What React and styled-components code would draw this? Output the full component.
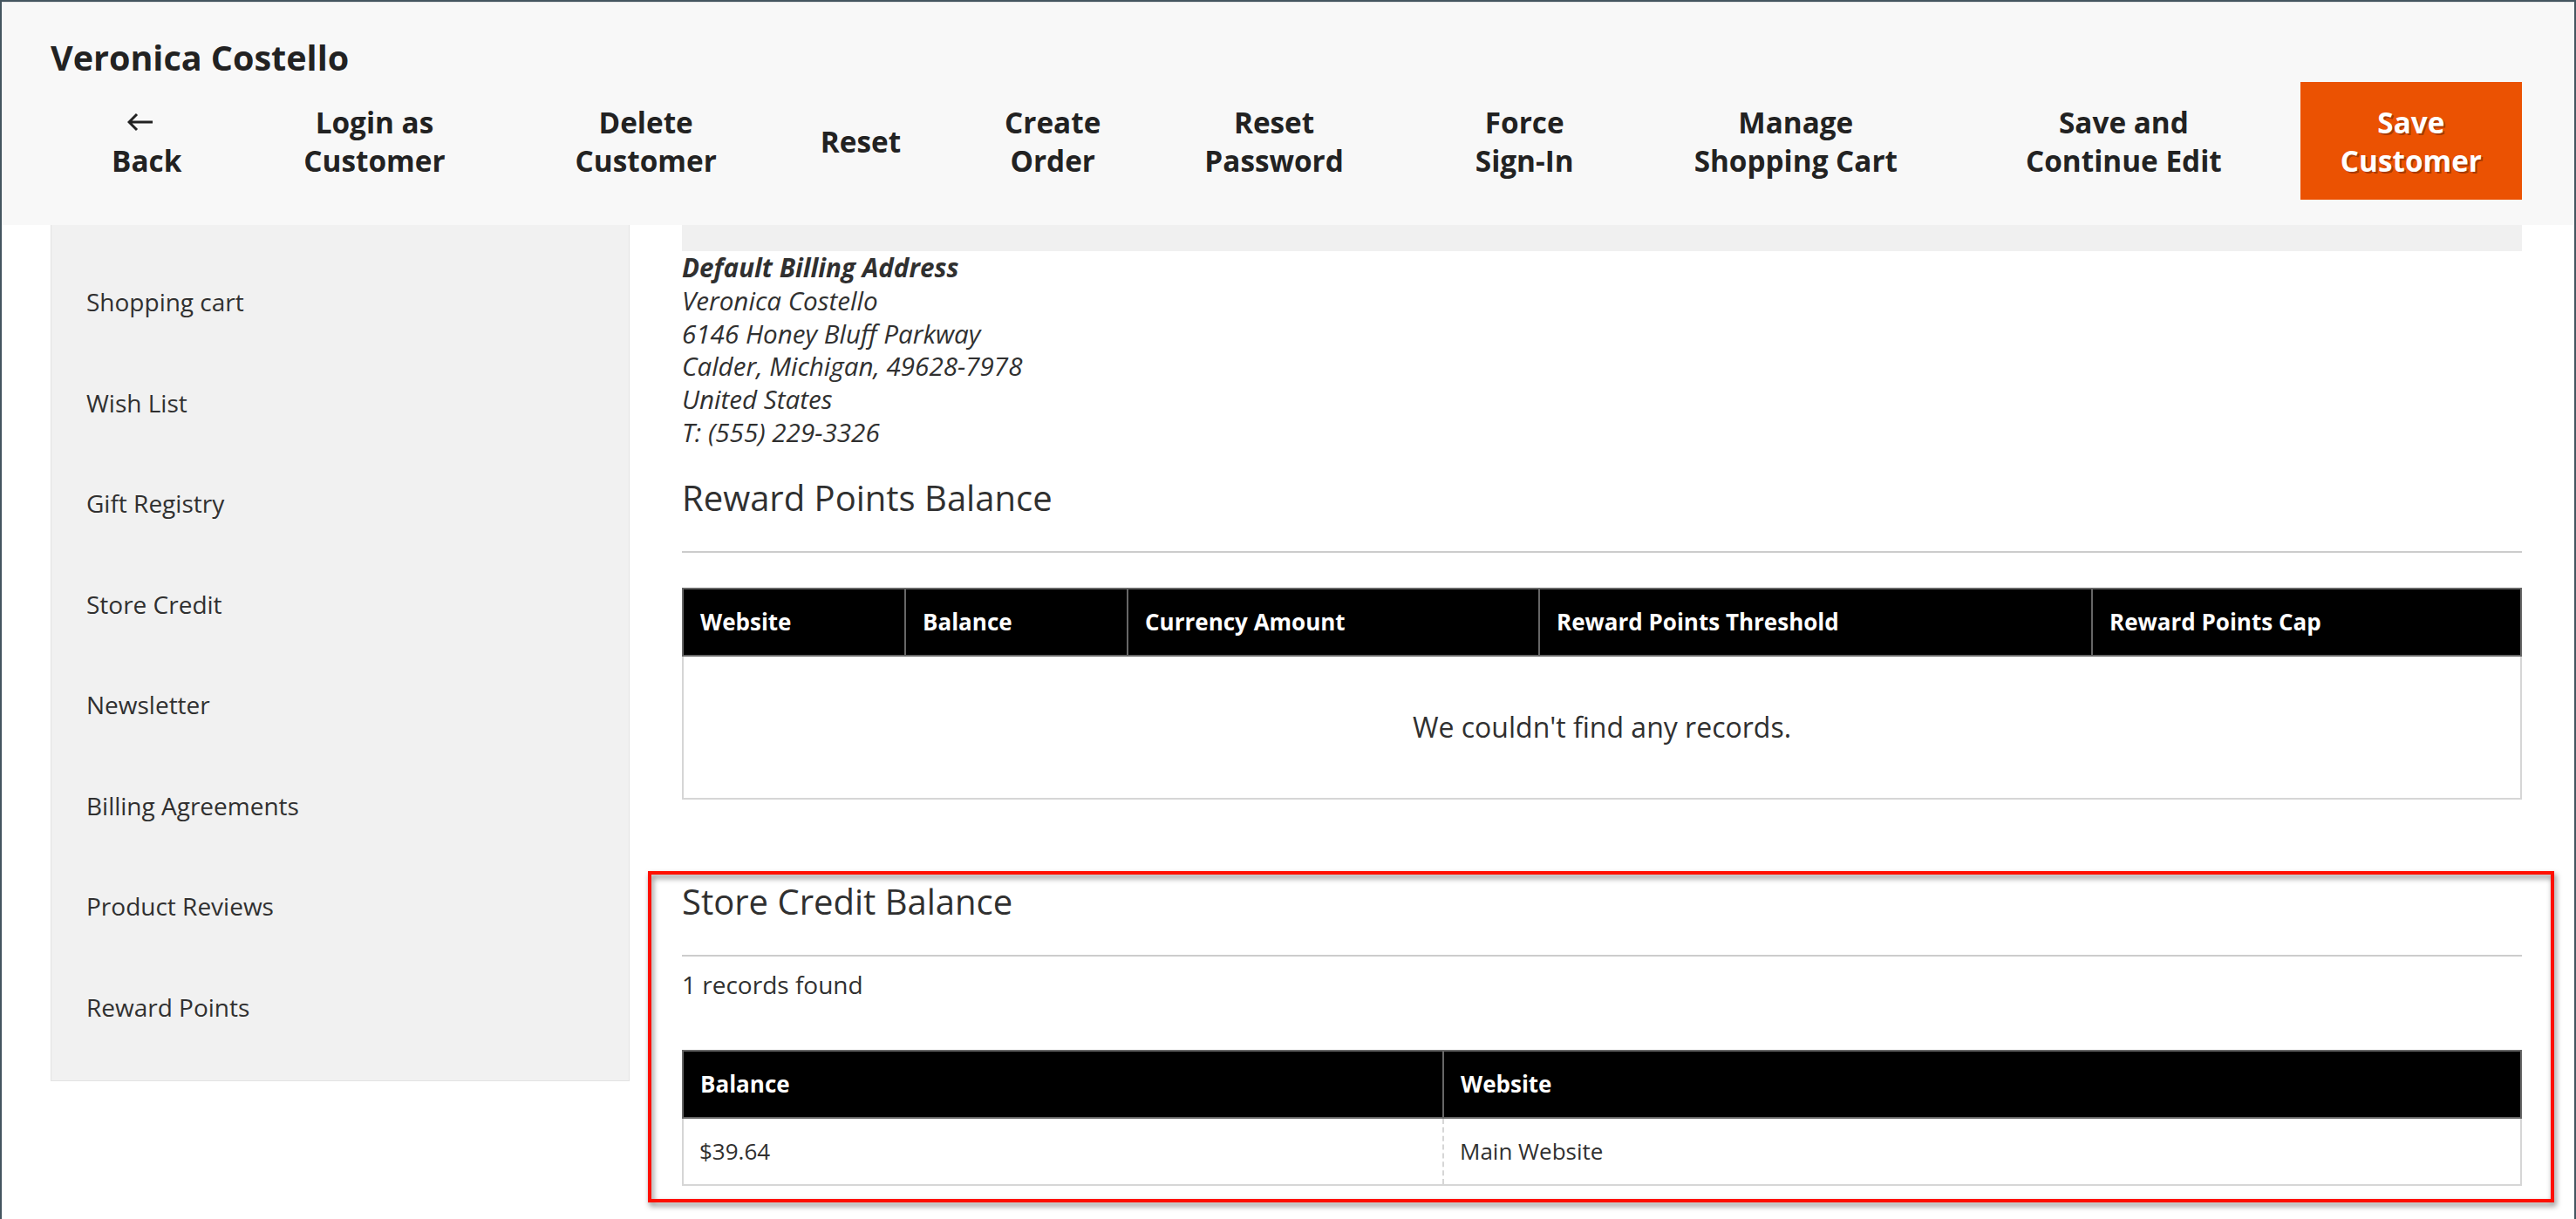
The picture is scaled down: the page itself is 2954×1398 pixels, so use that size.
import React from "react";
import styled, { createGlobalStyle } from "styled-components";

const GlobalStyle = createGlobalStyle`
  html, body {
    margin: 0;
    padding: 0;
    background: #ffffff;
  }
  body {
    font-family: "Open Sans", "Liberation Sans", sans-serif;
    color: #303030;
  }
  * {
    box-sizing: border-box;
  }
`;

// window frame
const Frame = styled.div`
  min-height: 100vh;
  border: 2px solid #44555f;
  border-bottom: none;
  background: #ffffff;
  overflow: hidden;
`;

const Header = styled.header`
  background: #f8f8f8;
  border-top: 1px solid #e4e4e4;
  padding: 36px 60px 29px 56px;
`;

const Title = styled.h1`
  margin: 0;
  font-size: 39.5px;
  line-height: 55px;
  font-weight: 700;
  color: #222222;
`;

const Actions = styled.div`
  display: flex;
  justify-content: flex-end;
  height: 135px;
`;

const ActionButton = styled.button`
  display: flex;
  flex-direction: column;
  align-items: center;
  justify-content: center;
  margin-right: ${(p) => p.$space || 0}px;
  padding: 0 46px;
  border: none;
  background: ${(p) => (p.$primary ? "#eb5202" : "transparent")};
  color: ${(p) => (p.$primary ? "#ffffff" : "#222222")};
  text-shadow: ${(p) => (p.$primary ? "2px 2px 0 rgba(0, 0, 0, 0.3)" : "none")};
  font-family: inherit;
  font-size: 33.3px;
  font-weight: 700;
  line-height: 44px;
  text-align: center;
  white-space: nowrap;
  cursor: pointer;
`;

const Line = styled.span`
  display: block;
`;

const ArrowWrap = styled.span`
  display: flex;
  align-items: center;
  justify-content: center;
  height: 44px;
  padding-right: 14px;
`;

// page body
const Body = styled.div`
  display: flex;
  align-items: flex-start;
  gap: 60px;
  padding: 0 60px 0 56px;
`;

const Sidebar = styled.nav`
  flex: 0 0 664px;
  background: #f1f1f1;
  border: 1px solid #e3e3e3;
  border-top: none;
  padding: 31px 0 26px;
`;

const TabItem = styled.div`
  padding: 39px 40px;
  font-size: 28px;
  line-height: 37.5px;
  color: #303030;
`;

const Main = styled.main`
  flex: 1;
  min-width: 0;
`;

const InfoBand = styled.div`
  height: 30px;
  background: #f0f0f0;
`;

const Address = styled.address`
  font-style: italic;
  font-size: 29.6px;
  line-height: 37.8px;
  color: #303030;
`;

const AddressTitle = styled.strong`
  display: block;
  font-weight: 700;
`;

const Section = styled.section`
  position: relative;
  margin-top: ${(p) => p.$top}px;
`;

const SectionTitle = styled.h2`
  margin: 0;
  padding-bottom: 34px;
  border-bottom: 2px solid #cccccc;
  font-size: 40px;
  line-height: 54px;
  font-weight: 400;
  color: #303030;
`;

const Count = styled.div`
  margin-top: 13px;
  font-size: 28px;
  line-height: 38px;
`;

const Grid = styled.div`
  margin-top: ${(p) => p.$top}px;
`;

const HeadRow = styled.div`
  display: grid;
  grid-template-columns: ${(p) => p.$cols};
  background: #000000;
  border: 2px solid #666666;
`;

const HeadCell = styled.div`
  height: 75px;
  display: flex;
  align-items: center;
  padding: 0 19px;
  color: #ffffff;
  font-size: 26px;
  font-weight: 700;

  & + & {
    border-left: 2px solid #666666;
  }
`;

const BodyRow = styled.div`
  display: grid;
  grid-template-columns: ${(p) => p.$cols};
  border: 2px solid #d6d6d6;
  border-top: none;
`;

const Cell = styled.div`
  height: 75px;
  display: flex;
  align-items: center;
  padding: 0 18px;
  font-size: 26px;
  color: #303030;

  & + & {
    border-left: 2px dashed #d6d6d6;
  }
`;

const EmptyCell = styled.div`
  grid-column: 1 / -1;
  height: 162px;
  display: flex;
  align-items: center;
  justify-content: center;
  font-size: 32px;
  color: #303030;
`;

// red annotation drawn over the store credit block
const Highlight = styled.div`
  position: absolute;
  top: -8px;
  left: -39px;
  right: -37px;
  bottom: -19px;
  border: 4px solid #ff1000;
  filter: drop-shadow(2px 4px 3px rgba(0, 0, 0, 0.5));
  pointer-events: none;
`;

const BackArrow = () => (
  <svg width="30" height="22" viewBox="0 0 30 22" fill="none">
    <path d="M29 11H3M11 2L2 11l9 9" stroke="#222" strokeWidth="3" />
  </svg>
);

const actions = [
  { lines: ["Login as", "Customer"], space: 57 },
  { lines: ["Delete", "Customer"], space: 27 },
  { lines: ["Reset"], space: 27 },
  { lines: ["Create", "Order"], space: 27 },
  { lines: ["Reset", "Password"], space: 59 },
  { lines: ["Force", "Sign-In"], space: 46 },
  { lines: ["Manage", "Shopping Cart"], space: 55 },
  { lines: ["Save and", "Continue Edit"], space: 44 },
];

const tabs = [
  "Shopping cart",
  "Wish List",
  "Gift Registry",
  "Store Credit",
  "Newsletter",
  "Billing Agreements",
  "Product Reviews",
  "Reward Points",
];

const rewardCols = ["Website", "Balance", "Currency Amount", "Reward Points Threshold", "Reward Points Cap"];

const App = () => {
  return (
    <Frame>
      <GlobalStyle />
      <Header>
        <Title>Veronica Costello</Title>
        <Actions>
          <ActionButton $space={48}>
            <ArrowWrap>
              <BackArrow />
            </ArrowWrap>
            <Line>Back</Line>
          </ActionButton>
          {actions.map((a) => (
            <ActionButton key={a.lines.join(" ")} $space={a.space}>
              {a.lines.map((l) => (
                <Line key={l}>{l}</Line>
              ))}
            </ActionButton>
          ))}
          <ActionButton $primary>
            <Line>Save</Line>
            <Line>Customer</Line>
          </ActionButton>
        </Actions>
      </Header>

      <Body>
        <Sidebar>
          {tabs.map((t) => (
            <TabItem key={t}>{t}</TabItem>
          ))}
        </Sidebar>

        <Main>
          <InfoBand />
          <Address>
            <AddressTitle>Default Billing Address</AddressTitle>
            Veronica Costello<br />
            6146 Honey Bluff Parkway<br />
            Calder, Michigan, 49628-7978<br />
            United States<br />
            T: (555) 229-3326
          </Address>

          <Section $top={29}>
            <SectionTitle>Reward Points Balance</SectionTitle>
            <Grid $top={40}>
              <HeadRow $cols="253px 255px 472px 634px 1fr">
                {rewardCols.map((c) => (
                  <HeadCell key={c}>{c}</HeadCell>
                ))}
              </HeadRow>
              <BodyRow $cols="1fr">
                <EmptyCell>We couldn't find any records.</EmptyCell>
              </BodyRow>
            </Grid>
          </Section>

          <Section $top={90}>
            <SectionTitle>Store Credit Balance</SectionTitle>
            <Count>1 records found</Count>
            <Grid $top={56}>
              <HeadRow $cols="870px 1fr">
                <HeadCell>Balance</HeadCell>
                <HeadCell>Website</HeadCell>
              </HeadRow>
              <BodyRow $cols="870px 1fr">
                <Cell>$39.64</Cell>
                <Cell>Main Website</Cell>
              </BodyRow>
            </Grid>
            <Highlight />
          </Section>
        </Main>
      </Body>
    </Frame>
  );
};

export default App;
